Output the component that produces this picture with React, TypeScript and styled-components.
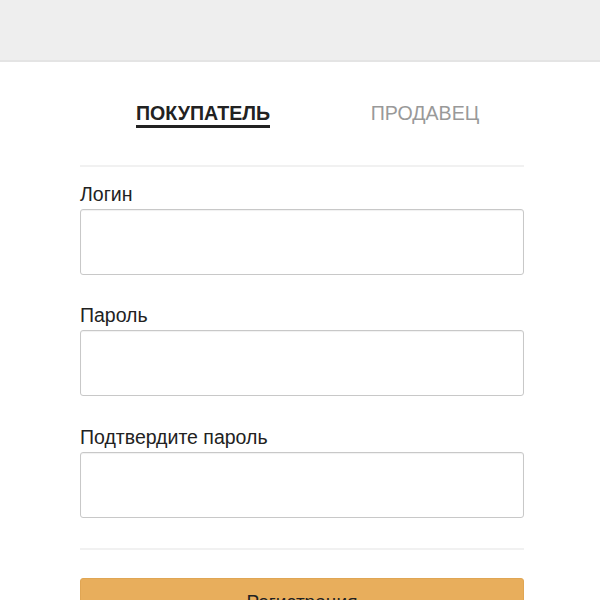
import React from "react";
import styled, { createGlobalStyle } from "styled-components";

const Global = createGlobalStyle`
  html, body { margin: 0; padding: 0; background: #fff; }
  body { font-family: "Liberation Sans", Arial, sans-serif; color: #222; }
`;

const Header = styled.div`
  height: 60px;
  background: #eeeeee;
  border-bottom: 2px solid #e4e4e4;
`;

const Content = styled.div`
  width: 444px;
  margin-left: 80px;
`;

const Tabs = styled.div`
  display: grid;
  grid-template-columns: 222px 222px;
  margin-left: 12px;
  padding-top: 40px;
`;

const Tab = styled.div<{ $active?: boolean }>`
  justify-self: center;
  font-size: 19.6px;
  line-height: 23px;
  font-weight: ${(p) => (p.$active ? 700 : 400)};
  color: ${(p) => (p.$active ? "#222" : "#999")};
  padding-bottom: 0;
  border-bottom: 3px solid ${(p) => (p.$active ? "#222" : "transparent")};
`;

const Divider = styled.div<{ $top: number }>`
  height: 2px;
  background: #f1f1f1;
  margin-top: ${(p) => p.$top}px;
`;

const Field = styled.div<{ $top: number }>`
  display: flex;
  flex-direction: column;
  margin-top: ${(p) => p.$top}px;
`;

const Label = styled.label`
  font-size: 19.5px;
  line-height: 22px;
  color: #222;
  margin-bottom: 4px;
`;

const Input = styled.input`
  box-sizing: border-box;
  height: 66px;
  width: 100%;
  border: 1px solid #c8c8c8;
  border-radius: 3px;
  box-shadow: inset 0 1px 1px rgba(0, 0, 0, 0.06);
  font-family: inherit;
  font-size: 18px;
  padding: 0 12px;
  outline: none;
`;

const Button = styled.button`
  box-sizing: border-box;
  width: 100%;
  height: 48px;
  margin-top: 28px;
  background: #e8ae5c;
  border: 1px solid #e0a654;
  border-radius: 3px;
  font-family: inherit;
  font-size: 19px;
  color: #222;
`;

export default function App() {
  return (
    <>
      <Global />
      <Header />
      <Content>
        <Tabs>
          <Tab $active>ПОКУПАТЕЛЬ</Tab>
          <Tab>ПРОДАВЕЦ</Tab>
        </Tabs>
        <Divider $top={37} />
        <Field $top={16}>
          <Label>Логин</Label>
          <Input />
        </Field>
        <Field $top={29}>
          <Label>Пароль</Label>
          <Input type="password" />
        </Field>
        <Field $top={30}>
          <Label>Подтвердите пароль</Label>
          <Input type="password" />
        </Field>
        <Divider $top={30} />
        <Button>Регистрация</Button>
      </Content>
    </>
  );
}
